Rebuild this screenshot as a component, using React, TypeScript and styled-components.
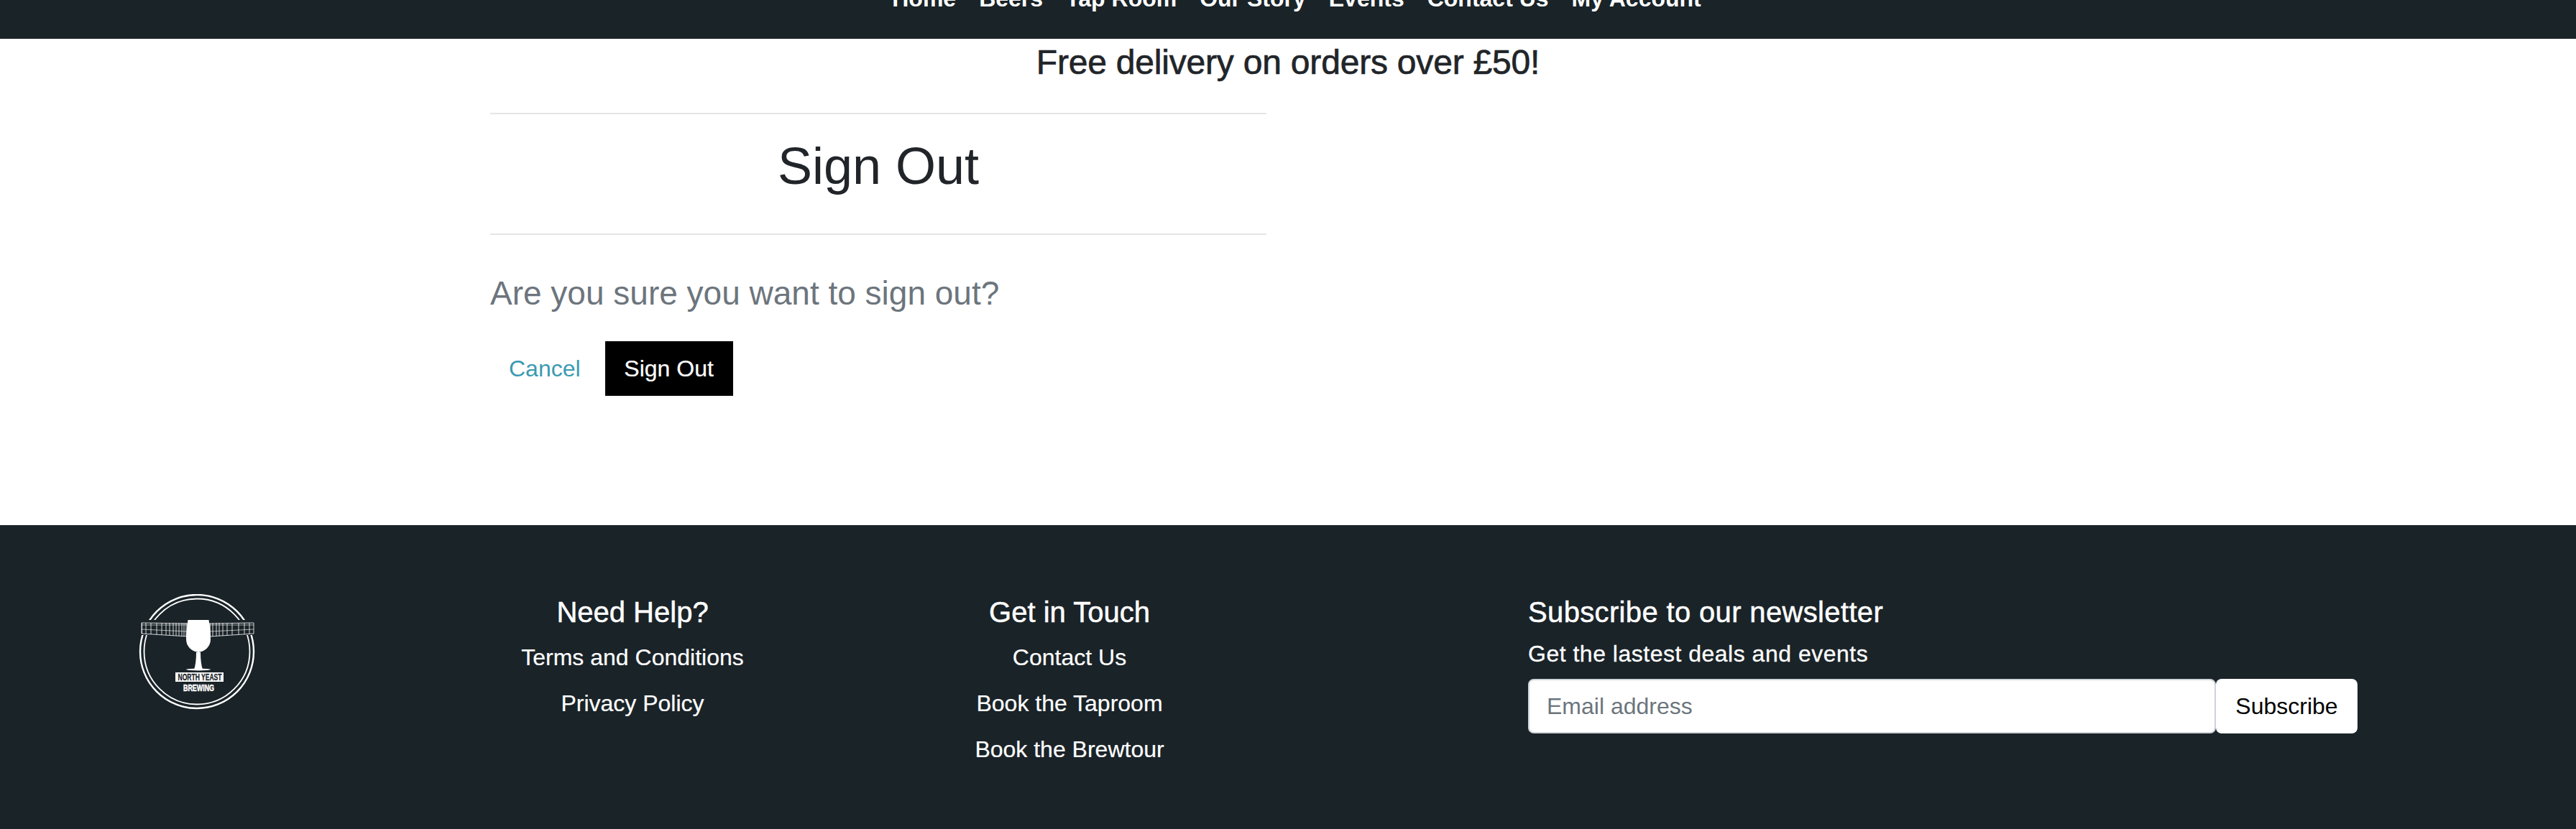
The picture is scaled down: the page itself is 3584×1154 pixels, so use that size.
import styled, { createGlobalStyle } from "styled-components";

const GlobalStyle = createGlobalStyle`
	html, body {
		margin: 0;
		padding: 0;
		height: 1154px;
		overflow: hidden;
		background: #fff;
		font-family: "Liberation Sans", Arial, sans-serif;
		font-size: 32px;
		line-height: 48px;
		color: #212529;
	}
	* {
		box-sizing: border-box;
	}
`;

const Nav = styled.nav`
	height: 54px;
	background: #1a2328;
	display: flex;
	justify-content: center;
	align-items: flex-end;
	gap: 32px;
	padding: 0 0 32px 24px;
	overflow: hidden;
	a {
		color: #fff;
		font-weight: 700;
		white-space: nowrap;
	}
`;

const Banner = styled.div`
	height: 66px;
	font-size: 48px;
	line-height: 66px;
	letter-spacing: -0.2px;
	text-align: center;
	-webkit-text-stroke: 0.7px #212529;
`;

const Main = styled.main`
	height: 611px;
	width: 1080px;
	margin-left: 682px;
	padding-top: 37px;
`;

const Rule = styled.hr`
	margin: 0;
	border: 0;
	border-top: 2px solid #e5e5e5;
`;

const Title = styled.h1`
	margin: 0;
	height: 166px;
	font-size: 72px;
	font-weight: 400;
	line-height: 144px;
	text-align: center;
`;

const Question = styled.h2`
	margin: 0;
	padding-top: 46px;
	height: 148px;
	font-size: 46px;
	font-weight: 400;
	line-height: 70px;
	color: #6c757d;
`;

const Actions = styled.div`
	display: flex;
`;

const CancelLink = styled.a`
	height: 76px;
	padding: 0 26px;
	line-height: 76px;
	color: #3a9ab2;
`;

const SignOutButton = styled.button`
	height: 76px;
	width: 178px;
	margin-left: 8px;
	border: 0;
	padding: 0;
	background: #000;
	color: #fff;
	font: inherit;
	-webkit-text-stroke: 0.2px #fff;
`;

const Footer = styled.footer`
	height: 423px;
	background: #1a2328;
	color: #fff;
	display: grid;
	grid-template-columns: 576px 608px 608px 1fr;
	padding-top: 96px;
`;

const LogoCol = styled.div`
	padding-left: 193px;
	svg {
		display: block;
	}
`;

const LinkCol = styled.div`
	text-align: center;
`;

const ColTitle = styled.h5`
	margin: 0 0 15px;
	padding-top: 1px;
	font-size: 40px;
	font-weight: 400;
	line-height: 48px;
	-webkit-text-stroke: 0.5px #fff;
`;

const NewsTitle = styled(ColTitle)`
	margin-bottom: 0;
	letter-spacing: 0.35px;
`;

const FootLink = styled.a`
	display: block;
	margin-bottom: 16px;
	color: #fff;
	-webkit-text-stroke: 0.2px #fff;
`;

const NewsCol = styled.div`
	padding-left: 334px;
	padding-right: 304px;
`;

const NewsText = styled.div`
	height: 69px;
	padding-top: 12px;
	line-height: 44px;
	letter-spacing: 0.5px;
	-webkit-text-stroke: 0.3px #fff;
`;

const NewsForm = styled.form`
	display: flex;
`;

const EmailInput = styled.input`
	flex: 1;
	min-width: 0;
	height: 76px;
	padding: 0 24px;
	border: 2px solid #ced4da;
	border-radius: 8px;
	background: #fff;
	font: inherit;
	&::placeholder {
		color: #6c757d;
		opacity: 1;
	}
`;

const SubscribeButton = styled.button`
	width: 197px;
	height: 76px;
	border: 0;
	padding: 0;
	border-radius: 8px;
	background: #fff;
	color: #000;
	font: inherit;
`;

const leftBars = [4.5, 10, 17, 25, 32, 38, 43, 48, 52, 56, 60, 63, 66];
const rightBars = [99, 103, 108, 112, 117, 123, 130, 139, 147, 154];

const Logo = () => (
	<svg width="162" height="162" viewBox="0 0 162 162">
		<circle cx="81" cy="80" r="79" fill="none" stroke="#fff" strokeWidth="2.4" />
		<circle cx="81" cy="80" r="73.5" fill="none" stroke="#fff" strokeWidth="1.8" />
		<path d="M0 36 H163 V57 H0 Z" fill="#1a2328" />
		<path d="M4 40 L68 41 V59 L4 55 Z M99 41 L160 40 V55 L99 59 Z" fill="none" stroke="#fff" strokeWidth="0.8" />
		<path d="M4 49 L68 52 M99 52 L160 49 M4 43 L68 43 M99 43 L160 43" fill="none" stroke="#fff" strokeWidth="0.6" />
		{leftBars.map((x) => (
			<path key={x} d={`M${x} 40 V${55 + (x - 4) / 16}`} stroke="#fff" strokeWidth="0.8" />
		))}
		{rightBars.map((x) => (
			<path key={x} d={`M${x} 40 V${59 - (x - 99) / 15}`} stroke="#fff" strokeWidth="0.8" />
		))}
		<path d="M68.500 36 H97.500 C99 45 100 54 100 63 C100 73 92 80 83 81 C74 80 66 73 66 63 C66 54 67 45 68.500 36 Z" fill="#fff" />
		<path d="M80 81 H86 C86 91 87 99 89 105 H77 C79 99 80 91 80 81 Z" fill="#fff" />
		<ellipse cx="83" cy="105" rx="17" ry="1.400" fill="#fff" />
		<rect x="51" y="109" width="67" height="13" fill="#fff" />
		<text x="85" y="120" textAnchor="middle" fontFamily="'Liberation Sans', sans-serif" fontSize="12" fontWeight="700" fill="#1a2328" stroke="#1a2328" strokeWidth="0.3" textLength="61" lengthAdjust="spacingAndGlyphs">NORTH YEAST</text>
		<text x="83.500" y="135" textAnchor="middle" fontFamily="'Liberation Sans', sans-serif" fontSize="12" fontWeight="700" fill="#fff" stroke="#fff" strokeWidth="0.5" textLength="43" lengthAdjust="spacingAndGlyphs">BREWING</text>
	</svg>
);

export default function App() {
	return (
		<>
			<GlobalStyle />
			<Nav>
				<a>Home</a>
				<a>Beers</a>
				<a>Tap Room</a>
				<a>Our Story</a>
				<a>Events</a>
				<a>Contact Us</a>
				<a>My Account</a>
			</Nav>
			<Banner>Free delivery on orders over £50!</Banner>
			<Main>
				<Rule />
				<Title>Sign Out</Title>
				<Rule />
				<Question>Are you sure you want to sign out?</Question>
				<Actions>
					<CancelLink>Cancel</CancelLink>
					<SignOutButton>Sign Out</SignOutButton>
				</Actions>
			</Main>
			<Footer>
				<LogoCol>
					<Logo />
				</LogoCol>
				<LinkCol>
					<ColTitle>Need Help?</ColTitle>
					<FootLink>Terms and Conditions</FootLink>
					<FootLink>Privacy Policy</FootLink>
				</LinkCol>
				<LinkCol>
					<ColTitle>Get in Touch</ColTitle>
					<FootLink>Contact Us</FootLink>
					<FootLink>Book the Taproom</FootLink>
					<FootLink>Book the Brewtour</FootLink>
				</LinkCol>
				<NewsCol>
					<NewsTitle>Subscribe to our newsletter</NewsTitle>
					<NewsText>Get the lastest deals and events</NewsText>
					<NewsForm>
						<EmailInput placeholder="Email address" />
						<SubscribeButton type="button">Subscribe</SubscribeButton>
					</NewsForm>
				</NewsCol>
			</Footer>
		</>
	);
}
